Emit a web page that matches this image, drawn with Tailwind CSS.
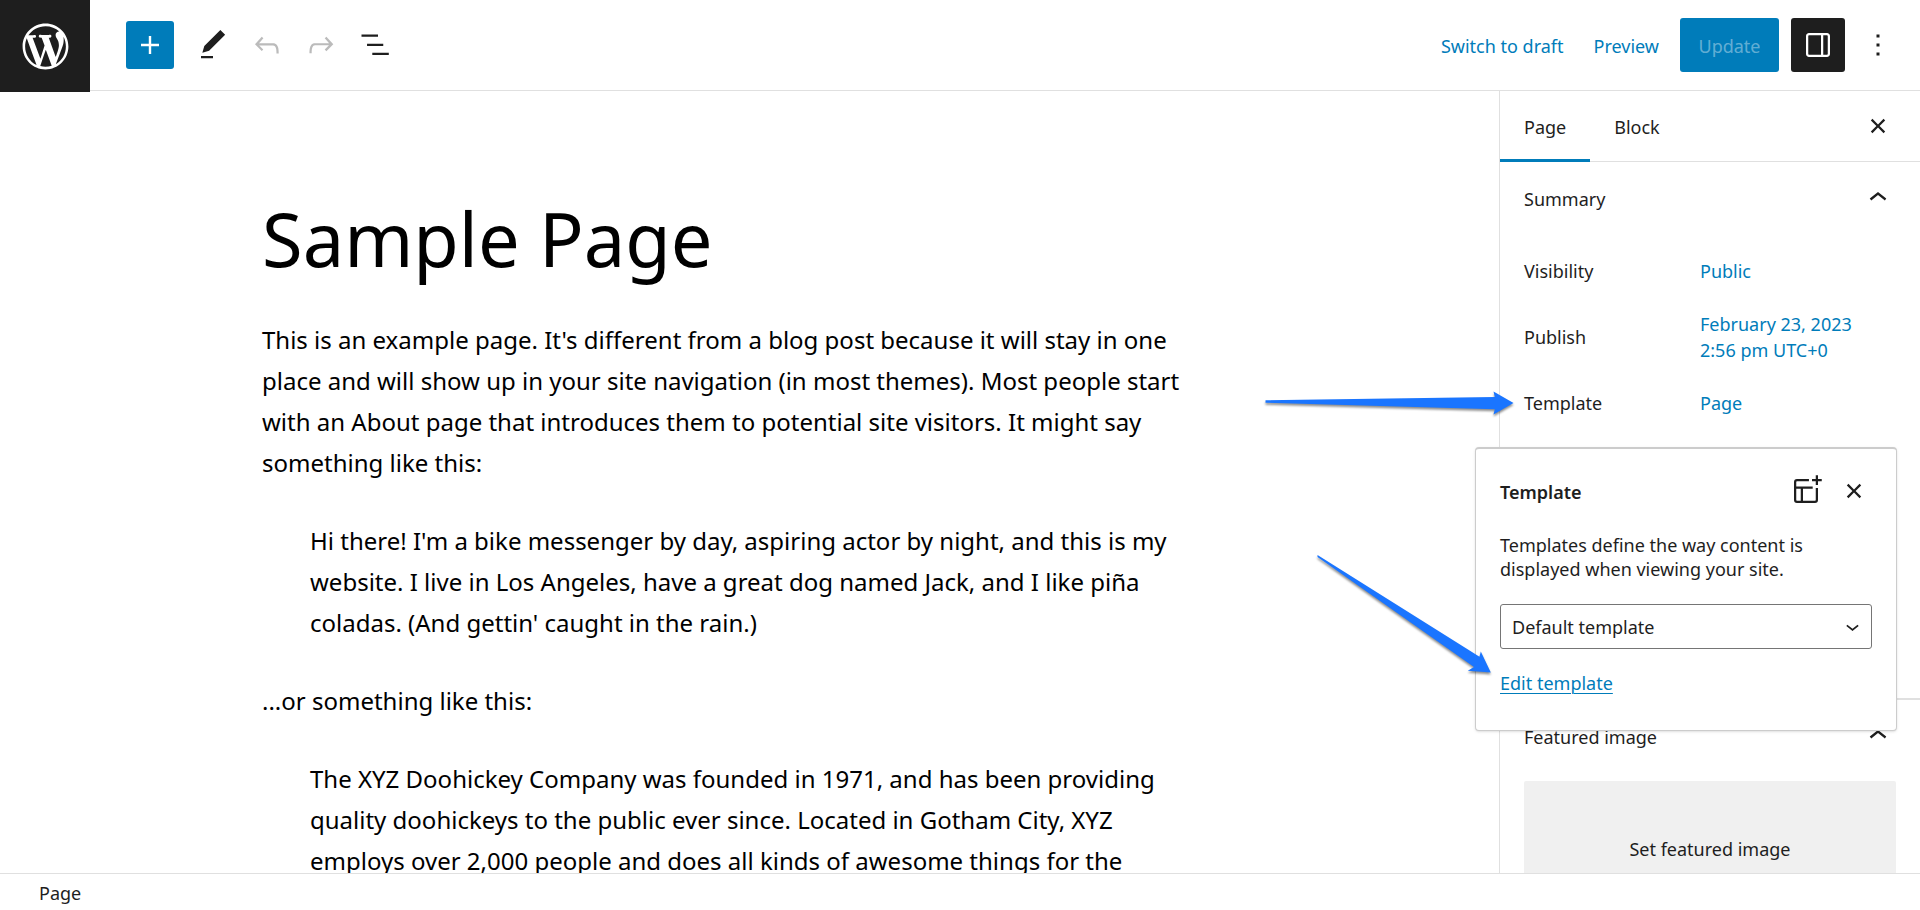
<!DOCTYPE html>
<html lang="en">
<head>
    <meta charset="utf-8" />
    <meta name="viewport" content="width=device-width, initial-scale=1" />
    <title>Edit Page: Sample Page</title>
    <script src="https://cdn.jsdelivr.net/npm/@tailwindcss/browser@4"></script>
</head>
<body class="bg-white">
    <div class="relative flex h-screen flex-col overflow-hidden font-['Segoe_UI','Noto_Sans',sans-serif] text-[18px] leading-[26px] text-[#1e1e1e]">

        <!-- Top toolbar -->
        <header class="flex h-[91px] shrink-0 items-center border-b border-[#e0e0e0]">
            <a href="#" aria-label="View pages" class="z-10 flex h-[92px] w-[90px] shrink-0 items-center justify-center self-start bg-[#1e1e1e] text-white">
                <svg class="h-[55px] w-[55px]" viewBox="-2 -2 24 24" fill="currentColor" aria-hidden="true">
                    <path d="M20 10c0-5.51-4.49-10-10-10C4.48 0 0 4.49 0 10c0 5.52 4.48 10 10 10 5.51 0 10-4.48 10-10zM7.78 15.37L4.37 6.22c.55-.02 1.17-.08 1.17-.08.5-.06.44-1.13-.06-1.11 0 0-1.45.11-2.37.11-.18 0-.37 0-.58-.01C4.12 2.69 6.87 1.11 10 1.11c2.33 0 4.45.87 6.05 2.34-.68-.11-1.65.39-1.65 1.58 0 .74.45 1.36.9 2.1.35.61.55 1.36.55 2.46 0 1.49-1.4 5-1.4 5l-3.03-8.37c.54-.02.82-.17.82-.17.5-.05.44-1.25-.06-1.22 0 0-1.44.12-2.38.12-.87 0-2.33-.12-2.33-.12-.5-.03-.56 1.2-.06 1.22l.92.08 1.26 3.41zM17.41 10c.24-.64.74-1.87.43-4.25.7 1.29 1.05 2.71 1.05 4.25 0 3.29-1.73 6.24-4.4 7.78.97-2.59 1.94-5.2 2.92-7.78zM6.1 18.09C3.12 16.65 1.11 13.53 1.11 10c0-1.3.23-2.48.72-3.59C3.25 10.3 4.67 14.2 6.1 18.09zm4.03-6.63l2.58 6.98c-.86.29-1.76.45-2.71.45-.79 0-1.57-.11-2.29-.33.81-2.38 1.62-4.74 2.42-7.1z" />
                </svg>
            </a>

            <div class="flex items-center pl-9">
                <button type="button" aria-label="Toggle block inserter" class="mr-3 flex size-12 items-center justify-center rounded-[3px] bg-[#007cba] text-white">
                    <svg class="size-9" viewBox="0 0 24 24" fill="currentColor"><path d="M18 11.2h-5.2V6h-1.6v5.2H6v1.6h5.2V18h1.6v-5.2H18z" /></svg>
                </button>
                <button type="button" aria-label="Tools" class="flex size-[54px] items-center justify-center">
                    <svg class="size-9" viewBox="0 0 24 24" fill="currentColor"><path d="M20.1 5.1L16.9 2 6.2 12.7l-1.3 4.4 4.5-1.3L20.1 5.1zM4 20.8h8v-1.5H4v1.5z" /></svg>
                </button>
                <button type="button" aria-label="Undo" disabled class="flex size-[54px] items-center justify-center text-[#1e1e1e]/30">
                    <svg class="size-9" viewBox="0 0 24 24" fill="currentColor"><path d="M18.3 11.7c-.6-.6-1.4-.9-2.3-.9H6.7l2.9-3.3-1.1-1-4.5 5L8.5 16l1-1-2.7-2.7H16c.5 0 .9.2 1.3.5 1 1 1 3.4 1 4.5v.3h1.5v-.2c0-1.5 0-4.3-1.5-5.7z" /></svg>
                </button>
                <button type="button" aria-label="Redo" disabled class="flex size-[54px] items-center justify-center text-[#1e1e1e]/30">
                    <svg class="size-9" viewBox="0 0 24 24" fill="currentColor"><path d="M15.6 6.5l-1.1 1 2.9 3.3H8c-.9 0-1.7.3-2.3.9-1.4 1.5-1.4 4.2-1.4 5.6v.2h1.5v-.3c0-1.1 0-3.5 1-4.5.3-.3.7-.5 1.3-.5h9.2L14.5 15l1.1 1.1 4.6-4.6-4.6-5z" /></svg>
                </button>
                <button type="button" aria-label="List view" class="flex size-[54px] items-center justify-center">
                    <svg class="size-9" viewBox="0 0 24 24" fill="currentColor"><path d="M3 5h11v1.5H3zM6.7 11.1h10.8v1.5H6.7zM10.2 17.2h11v1.5h-11z" /></svg>
                </button>
            </div>

            <div class="ml-auto flex items-center pr-[15px]">
                <button type="button" class="mr-[30px] pt-0.5 text-[#007cba]">Switch to draft</button>
                <a href="#" class="mr-[21px] pt-0.5 text-[#007cba]">Preview</a>
                <button type="button" disabled class="mr-3 h-[54px] min-w-[99px] rounded-[3px] bg-[#007cba] px-[18px] pt-0.5 text-white/40">Update</button>
                <button type="button" aria-label="Settings" class="mr-[6px] flex size-[54px] items-center justify-center rounded-[3px] bg-[#1e1e1e] text-white">
                    <svg class="size-9" viewBox="0 0 24 24" fill="currentColor"><path d="M18 4H6c-1.1 0-2 .9-2 2v12c0 1.1.9 2 2 2h12c1.1 0 2-.9 2-2V6c0-1.1-.9-2-2-2zm-4 14.5H6c-.3 0-.5-.2-.5-.5V6c0-.3.2-.5.5-.5h8v13zm4.5-.5c0 .3-.2.5-.5.5h-2.5v-13H18c.3 0 .5.2.5.5v12z" /></svg>
                </button>
                <button type="button" aria-label="Options" class="flex size-[54px] items-center justify-center">
                    <svg class="size-9" viewBox="0 0 24 24" fill="currentColor"><path d="M13 19h-2v-2h2v2zm0-6h-2v-2h2v2zm0-6h-2V5h2v2z" /></svg>
                </button>
            </div>
        </header>

        <div class="flex min-h-0 flex-1">
            <!-- Editor canvas -->
            <main class="min-w-0 flex-1 overflow-hidden">
                <div class="mx-auto max-w-[975px] pt-[93px] text-[24px] leading-[41px] text-black">
                    <h1 class="mb-[25px] text-[74px] leading-[110px]">Sample Page</h1>
                    <p class="mb-[37px] pr-6">This is an example page. It's different from a blog post because it will stay in one place and will show up in your site navigation (in most themes). Most people start with an About page that introduces them to potential site visitors. It might say something like this:</p>
                    <blockquote class="mx-12 mb-[37px]">Hi there! I'm a bike messenger by day, aspiring actor by night, and this is my website. I live in Los Angeles, have a great dog named Jack, and I like piña coladas. (And gettin' caught in the rain.)</blockquote>
                    <p class="mb-[37px]">...or something like this:</p>
                    <blockquote class="mx-12 mb-[37px]">The XYZ Doohickey Company was founded in 1971, and has been providing quality doohickeys to the public ever since. Located in Gotham City, XYZ employs over 2,000 people and does all kinds of awesome things for the</blockquote>
                </div>
            </main>

            <!-- Settings sidebar -->
            <aside class="relative w-[421px] shrink-0 border-l border-[#e0e0e0]">
                <div class="h-full overflow-hidden">
                    <div class="flex h-[71px] items-center border-b border-[#e0e0e0] pr-6">
                        <button type="button" class="h-[71px] border-b-[3px] border-[#007cba] px-6 pt-1">Page</button>
                        <button type="button" class="h-[71px] border-b-[3px] border-transparent px-6 pt-1">Block</button>
                        <button type="button" aria-label="Close settings" class="ml-auto">
                            <svg class="size-9" viewBox="0 0 24 24" fill="currentColor"><path d="M12 13.06l3.712 3.713 1.061-1.06L13.061 12l3.712-3.712-1.06-1.06L12 10.938 8.288 7.227l-1.061 1.06L10.939 12l-3.712 3.712 1.06 1.061L12 13.061z" /></svg>
                        </button>
                    </div>

                    <section class="h-[538px] border-b-2 border-[#e0e0e0] px-6">
                        <h2>
                            <button type="button" class="flex h-[72px] w-full items-center justify-between">
                                <span class="pt-0.5">Summary</span>
                                <svg class="size-9" viewBox="0 0 24 24" fill="currentColor"><path d="M6.5 12.4L12 8l5.5 4.4-.9 1.2L12 10l-4.5 3.6-1-1.2z" /></svg>
                            </button>
                        </h2>
                        <div class="grid grid-cols-[176px_1fr] items-center gap-y-[12px] pt-[10px]">
                            <span>Visibility</span>
                            <button type="button" class="h-[54px] text-left text-[#007cba]">Public</button>
                            <span>Publish</span>
                            <button type="button" class="h-[54px] text-left text-[#007cba]">February 23, 2023<br />2:56 pm UTC+0</button>
                            <span>Template</span>
                            <button type="button" class="h-[54px] text-left text-[#007cba]">Page</button>
                        </div>
                    </section>

                    <section class="px-6">
                        <h2>
                            <button type="button" class="flex h-[72px] w-full items-center justify-between">
                                <span class="pt-0.5">Featured image</span>
                                <svg class="size-9" viewBox="0 0 24 24" fill="currentColor"><path d="M6.5 12.4L12 8l5.5 4.4-.9 1.2L12 10l-4.5 3.6-1-1.2z" /></svg>
                            </button>
                        </h2>
                        <button type="button" class="mt-[9px] h-[136px] w-full rounded-[2px] bg-[#f0f0f0]">Set featured image</button>
                    </section>
                </div>

                <!-- Template popover -->
                <div class="absolute top-[356px] right-[23px] w-[422px] rounded-[4px] border border-t-2 border-[#ccc] bg-white px-6 pt-6 pb-[34px] shadow-sm">
                    <div class="flex items-center">
                        <h2 class="flex-1 pt-0.5 font-semibold">Template</h2>
                        <button type="button" aria-label="Add template" class="mr-3">
                            <svg class="size-9" viewBox="0 0 24 24" fill="currentColor" fill-rule="evenodd"><path d="M18.5 5.5V8H20V5.5h2.5V4H20V1.5h-1.5V4H16v1.5h2.5zM13.96 4H6a2 2 0 0 0-2 2v12a2 2 0 0 0 2 2h12a2 2 0 0 0 2-2v-7.96h-1.5V18a.5.5 0 0 1-.5.5h-8v-8l6.46.01V9.01L5.5 8.98V6a.5.5 0 0 1 .5-.5h7.96V4zM5.5 10.48V18a.5.5 0 0 0 .5.5h2.5v-8.01l-3-.01z" /></svg>
                        </button>
                        <button type="button" aria-label="Close">
                            <svg class="size-9" viewBox="0 0 24 24" fill="currentColor"><path d="M12 13.06l3.712 3.713 1.061-1.06L13.061 12l3.712-3.712-1.06-1.06L12 10.938 8.288 7.227l-1.061 1.06L10.939 12l-3.712 3.712 1.06 1.061L12 13.061z" /></svg>
                        </button>
                    </div>
                    <p class="mt-6 mb-[23px] leading-6">Templates define the way content is displayed when viewing your site.</p>
                    <div class="relative mb-[21px]">
                        <select aria-label="Template" class="h-[45px] w-full appearance-none rounded-[3px] border border-[#757575] bg-white px-[11px]">
                            <option>Default template</option>
                        </select>
                        <svg class="pointer-events-none absolute top-[9px] right-[6px] size-[27px]" viewBox="0 0 24 24" fill="currentColor"><path d="M17.5 11.6L12 16l-5.5-4.4.9-1.2L12 14l4.5-3.6 1 1.2z" /></svg>
                    </div>
                    <a href="#" class="text-[#007cba] underline decoration-1 underline-offset-3">Edit template</a>
                </div>
            </aside>
        </div>

        <!-- Breadcrumb bar -->
        <footer class="flex h-[37px] shrink-0 items-center border-t border-[#e0e0e0] px-[39px] pt-0.5">Page</footer>

        <!-- Callout arrows -->
        <svg class="pointer-events-none absolute top-[370px] right-[400px] h-[320px] w-[280px] text-[#1a75ff] drop-shadow-[0_2px_1px_rgba(0,0,0,0.45)]" viewBox="0 0 280 320" fill="currentColor" aria-hidden="true">
            <path d="M25.500 30.300L254.800 27L253.500 21.500L273.500 33L253.500 44.500L254.800 39.300L25.500 32.800z" />
            <path d="M77.500 185L239.500 286.700L240.800 281.500L250.800 302.500L227.800 300.800L234 297L77.500 187z" />
        </svg>
    </div>
</body>
</html>
